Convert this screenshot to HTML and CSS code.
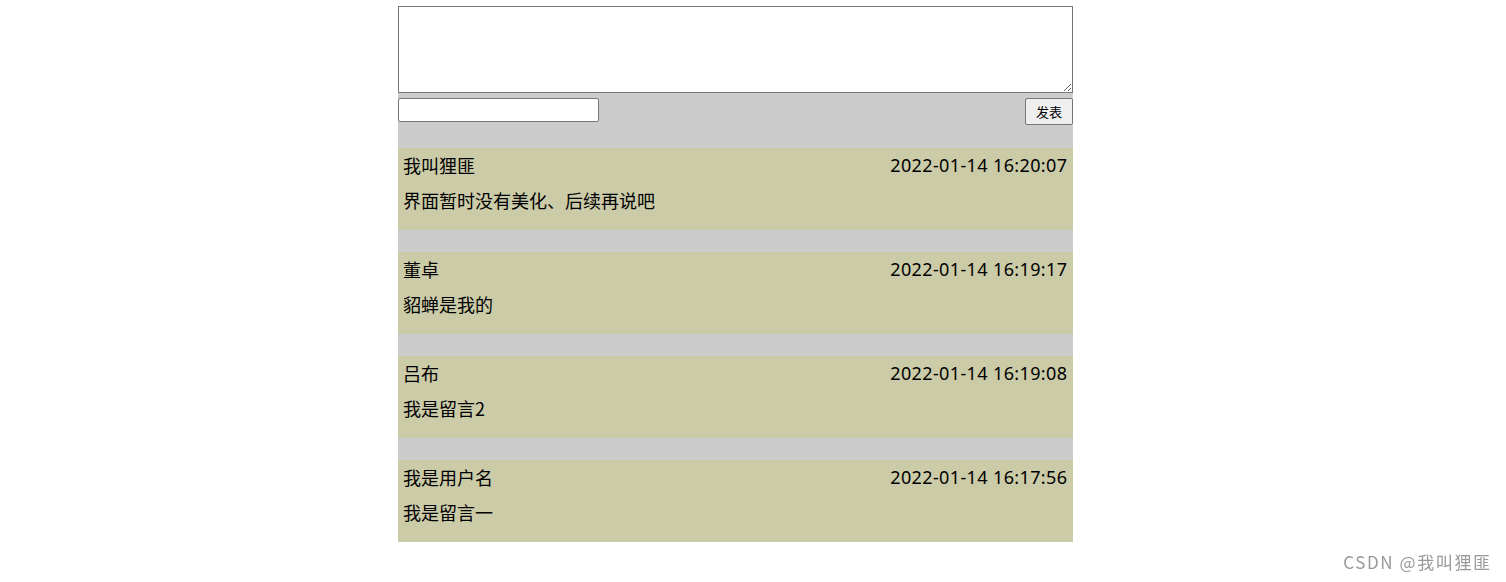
FILE: index.html
```html
<!DOCTYPE html>
<html lang="zh">
<head>
<meta charset="utf-8">
<title>留言板</title>
<link rel="stylesheet" href="styles.css">
</head>
<body>
<div class="board">
  <textarea class="msg-input"></textarea>
  <div class="panel">
    <div class="post-row">
      <input class="name-input" type="text">
      <button class="post-btn">发表</button>
    </div>
    <div class="list">
      <div class="card">
        <div class="card-head"><span>我叫狸匪</span><span class="time">2022-01-14 16:20:07</span></div>
        <div class="card-body">界面暂时没有美化、后续再说吧</div>
      </div>
      <div class="card">
        <div class="card-head"><span>董卓</span><span class="time">2022-01-14 16:19:17</span></div>
        <div class="card-body">貂蝉是我的</div>
      </div>
      <div class="card">
        <div class="card-head"><span>吕布</span><span class="time">2022-01-14 16:19:08</span></div>
        <div class="card-body">我是留言2</div>
      </div>
      <div class="card">
        <div class="card-head"><span>我是用户名</span><span class="time">2022-01-14 16:17:56</span></div>
        <div class="card-body">我是留言一</div>
      </div>
    </div>
  </div>
</div>
<div class="watermark">CSDN @我叫狸匪</div>
</body>
</html>
```
FILE: styles.css
```css
html, body {
  margin: 0;
  padding: 0;
  background: #fff;
}
body {
  font-family: "Noto Sans CJK SC", "Noto Sans", sans-serif;
  color: #000;
}
.board {
  width: 675px;
  margin: 6px 0 0 398px;
  display: flex;
  flex-direction: column;
}
.msg-input {
  display: block;
  box-sizing: border-box;
  width: 675px;
  height: 87px;
  margin: 0;
  border: 1px solid #767676;
  border-radius: 0;
  padding: 2px;
  resize: both;
  background: #fff;
}
.panel {
  background: #cccccc;
  display: flex;
  flex-direction: column;
}
.post-row {
  display: flex;
  justify-content: space-between;
  align-items: flex-start;
  padding-top: 5px;
  height: 55px;
  box-sizing: border-box;
}
.name-input {
  box-sizing: border-box;
  width: 201px;
  height: 24px;
  margin: 0;
  border: 1px solid #767676;
  border-radius: 2px;
  padding: 1px 2px;
  background: #fff;
}
.post-btn {
  box-sizing: border-box;
  width: 48px;
  height: 27px;
  margin: 0;
  padding: 0;
  font-family: "Noto Sans CJK SC", sans-serif;
  font-size: 13px;
  color: #000;
  background: #efefef;
  border: 1px solid #767676;
  border-radius: 2px;
}
.list {
  display: flex;
  flex-direction: column;
  gap: 22px;
}
.card {
  background: #cbcba8;
  height: 82px;
  box-sizing: border-box;
  padding: 5px 6px 0 5px;
  font-size: 18px;
}
.card-head {
  display: flex;
  justify-content: space-between;
  line-height: 24px;
  height: 24px;
}
.time {
  font-family: "Noto Sans", sans-serif;
  letter-spacing: 0.37px;
  margin-right: -0.37px;
}
.card-body {
  margin-top: 11px;
  line-height: 24px;
}
.watermark {
  position: fixed;
  right: 16px;
  bottom: 8px;
  font-size: 17px;
  letter-spacing: 1.6px;
  margin-right: -1.6px;
  color: #999;
  font-family: "Noto Sans CJK SC", sans-serif;
}
```
